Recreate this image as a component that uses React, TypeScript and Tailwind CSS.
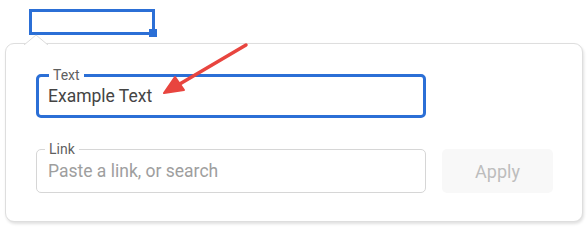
import React from 'react'

const blue = '#2b6fd6'

function Notch() {
  // small pointer on the panel's top edge, aiming at the selection
  return (
    <svg className="absolute left-[18px] top-[-10px]" width="26" height="12" viewBox="0 0 26 12">
      <path d="M0 11 L12 1 L24 11 Z" fill="#fff" />
      <path d="M0 11 L12 1 L24 11" fill="none" stroke="#dcdcdc" strokeWidth="1" />
      <rect x="0" y="11" width="26" height="2" fill="#fff" />
    </svg>
  )
}

function Arrow() {
  return (
    <svg className="absolute left-0 top-0 pointer-events-none" width="588" height="229">
      <line x1="246" y1="45" x2="178" y2="85" stroke="#e8453f" strokeWidth="3.5" strokeLinecap="round" />
      <path d="M164 93 L175 77 L184 90 Z" fill="#e8453f" stroke="#e8453f" strokeWidth="2" strokeLinejoin="round" />
    </svg>
  )
}

export default function App() {
  return (
    <div className="relative w-[588px] h-[229px] bg-white overflow-hidden" style={{ fontFamily: 'Roboto, "Liberation Sans", sans-serif' }}>
      {/* selected text box in the document */}
      <div className="relative ml-[29px] mt-[9px] w-[126px] h-[26px] border-[3px] border-[#2b6fd6]">
        <div className="absolute right-[-5px] bottom-[-5px] w-[8px] h-[8px] bg-[#2b6fd6]" />
      </div>

      <div className="relative ml-[5px] mt-[8px] w-[578px] h-[179px] rounded-[9px] border border-[#dedede] bg-white shadow-[1px_2px_3px_rgba(0,0,0,0.12)] pl-[30px] pt-[30px]">
        <Notch />

        <div className="flex flex-col gap-[31px]">
          <div className="relative w-[390px] h-[44px] rounded-[5px] border-[3px] flex items-center pl-[9px]" style={{ borderColor: blue }}>
            <span className="absolute left-[10px] top-[-11px] px-[4px] bg-white text-[14px] leading-[18px] text-[#5f5f5f]">Text</span>
            <span className="text-[17.5px] text-[#444] pt-[1px]">Example Text</span>
          </div>

          <div className="flex gap-[16px]">
            <div className="relative w-[390px] h-[44px] rounded-[5px] border border-[#d6d6d6] flex items-center pl-[11px]">
              <span className="absolute left-[8px] top-[-10px] px-[4px] bg-white text-[14px] leading-[18px] text-[#5f5f5f]">Link</span>
              <span className="text-[17.5px] text-[#9e9e9e] pt-[1px]">Paste a link, or search</span>
            </div>
            <div className="w-[111px] h-[44px] rounded-[5px] bg-[#f8f8f8] flex items-center justify-center text-[18px] text-[#bdbdbd]">
              Apply
            </div>
          </div>
        </div>
      </div>

      <Arrow />
    </div>
  )
}
